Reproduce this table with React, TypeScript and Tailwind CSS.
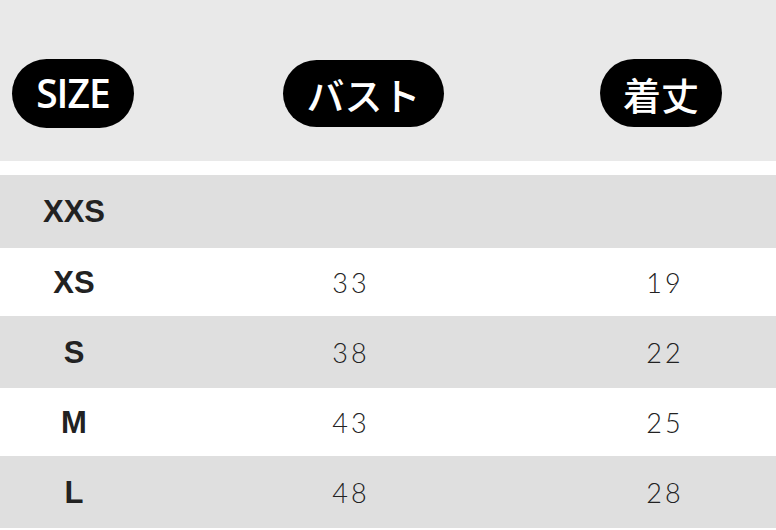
const rows = [
  { size: "XXS", bust: "", length: "", gray: true },
  { size: "XS", bust: "33", length: "19", gray: false },
  { size: "S", bust: "38", length: "22", gray: true },
  { size: "M", bust: "43", length: "25", gray: false },
  { size: "L", bust: "48", length: "28", gray: true },
];

const heights = ["h-[73px]", "h-[68px]", "h-[72px]", "h-[68px]", "h-[72px]"];

export default function App() {
  return (
    <div className="w-[776px] h-[530px] bg-white overflow-hidden">
      {/* header pills */}
      <div className="h-[161px] bg-[#e9e9e9] flex items-start pl-[12px] pt-[59px]">
        <div className="w-[122px] h-[69px] rounded-full bg-black flex items-center justify-center text-white text-[39px] font-semibold tracking-tight font-['Open_Sans',sans-serif]">
          SIZE
        </div>
        <div className="ml-[149px] mt-[1px] w-[161px] h-[67px] rounded-full bg-black flex items-center justify-center text-white text-[38px] font-medium font-['Noto_Sans_CJK_JP',sans-serif]">
          バスト
        </div>
        <div className="ml-[156px] w-[122px] h-[68px] rounded-full bg-black flex items-center justify-center text-white text-[38px] font-medium font-['Noto_Sans_CJK_JP',sans-serif]">
          着丈
        </div>
      </div>

      <div className="h-[14px] bg-white" />

      {rows.map((r, i) => (
        <div
          key={r.size}
          className={`grid grid-cols-[148px_406px_1fr] items-center ${heights[i]} ${r.gray ? "bg-[#dfdfdf]" : "bg-white"}`}
        >
          <div className="text-center pt-[2px] text-[31px] font-bold text-[#222] font-['Liberation_Sans',Arial,sans-serif]">
            {r.size}
          </div>
          <div className="text-center pt-[2px] text-[27px] font-light tracking-[3px] text-[#222] font-['Lato',sans-serif]">
            {r.bust}
          </div>
          <div className="text-center pt-[2px] text-[27px] font-light tracking-[3px] text-[#222] font-['Lato',sans-serif]">
            {r.length}
          </div>
        </div>
      ))}
    </div>
  );
}
